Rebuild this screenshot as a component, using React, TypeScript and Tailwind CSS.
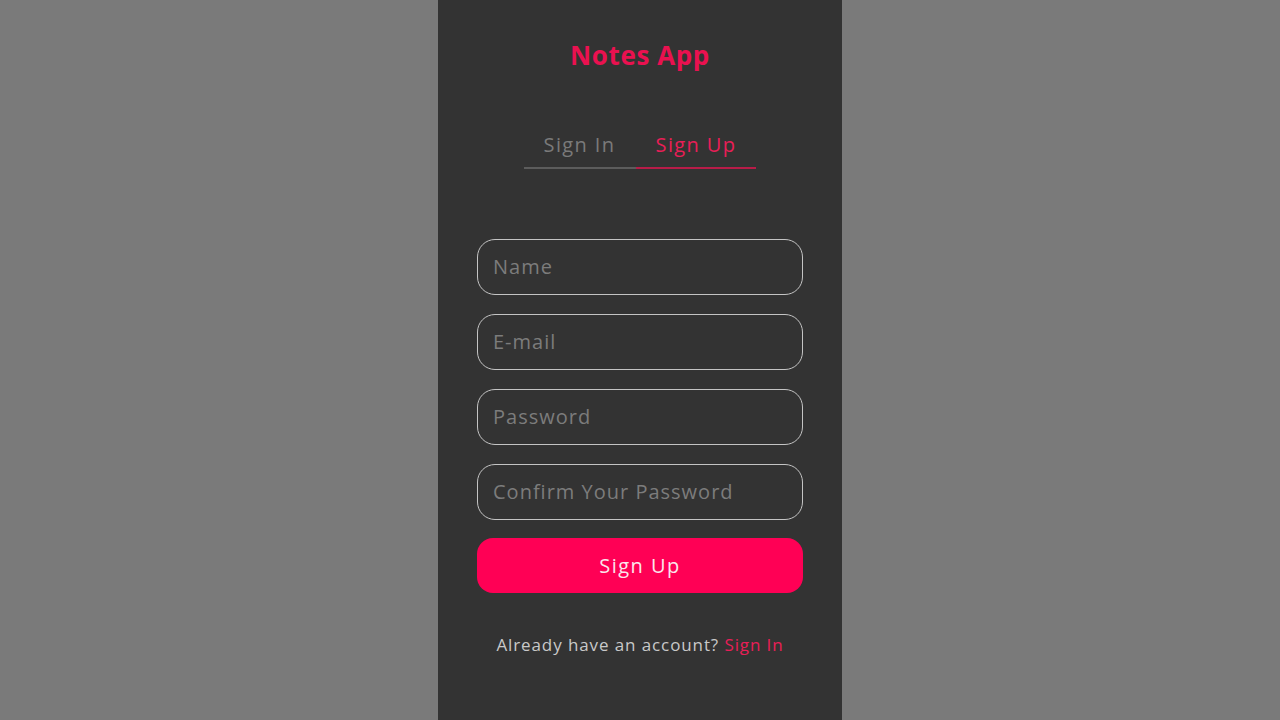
import { useState } from 'react'

const fields = ['Name', 'E-mail', 'Password', 'Confirm Your Password']

export default function App() {
  const [tab, setTab] = useState<'in' | 'up'>('up')

  return (
    <div className="flex min-h-screen justify-center bg-[#7a7a7a] font-['Open_Sans',sans-serif]">
      <div className="flex h-[720px] w-[404px] flex-col items-center bg-[#333333] pt-[38px]">
        <h1 className="text-[26px] font-bold leading-[34px] tracking-[0.6px] text-[#ea1150]">Notes App</h1>

        <div className="mt-[59px] flex">
          <button
            onClick={() => setTab('in')}
            className={`border-b-2 px-[20px] pb-[8px] text-[20px] leading-[28px] tracking-[1.4px] ${tab === 'in' ? 'border-[#b81c48] text-[#e91e57]' : 'border-[#5c5c5c] text-[#7a7a7a]'}`}
          >
            Sign In
          </button>
          <button
            onClick={() => setTab('up')}
            className={`border-b-2 px-[20px] pb-[8px] text-[20px] leading-[28px] tracking-[1.4px] ${tab === 'up' ? 'border-[#b81c48] text-[#e91e57]' : 'border-[#5c5c5c] text-[#7a7a7a]'}`}
          >
            Sign Up
          </button>
        </div>

        <form className="mt-[70px] flex w-[326px] flex-col gap-[19px]" onSubmit={(e) => e.preventDefault()}>
          {fields.map((f) => (
            <input
              key={f}
              placeholder={f}
              type={f.includes('Password') ? 'password' : 'text'}
              className="h-[56px] rounded-[18px] border border-[#c4c4c4] bg-transparent px-[15px] pb-px text-[20px] tracking-[1px] text-[#dddddd] placeholder:text-[#7c7c7c] focus:outline-none"
            />
          ))}
          <button className="-mt-px h-[55px] rounded-[16px] bg-[#ff0055] text-[20px] tracking-[1.5px] text-[#fbe6ec]">
            Sign Up
          </button>
        </form>

        <p className="mt-[40px] text-[17px] leading-[24px] tracking-[0.9px] text-[#c9c9c9]">
          Already have an account? <a className="cursor-pointer text-[#e91e57]">Sign In</a>
        </p>
      </div>
    </div>
  )
}
